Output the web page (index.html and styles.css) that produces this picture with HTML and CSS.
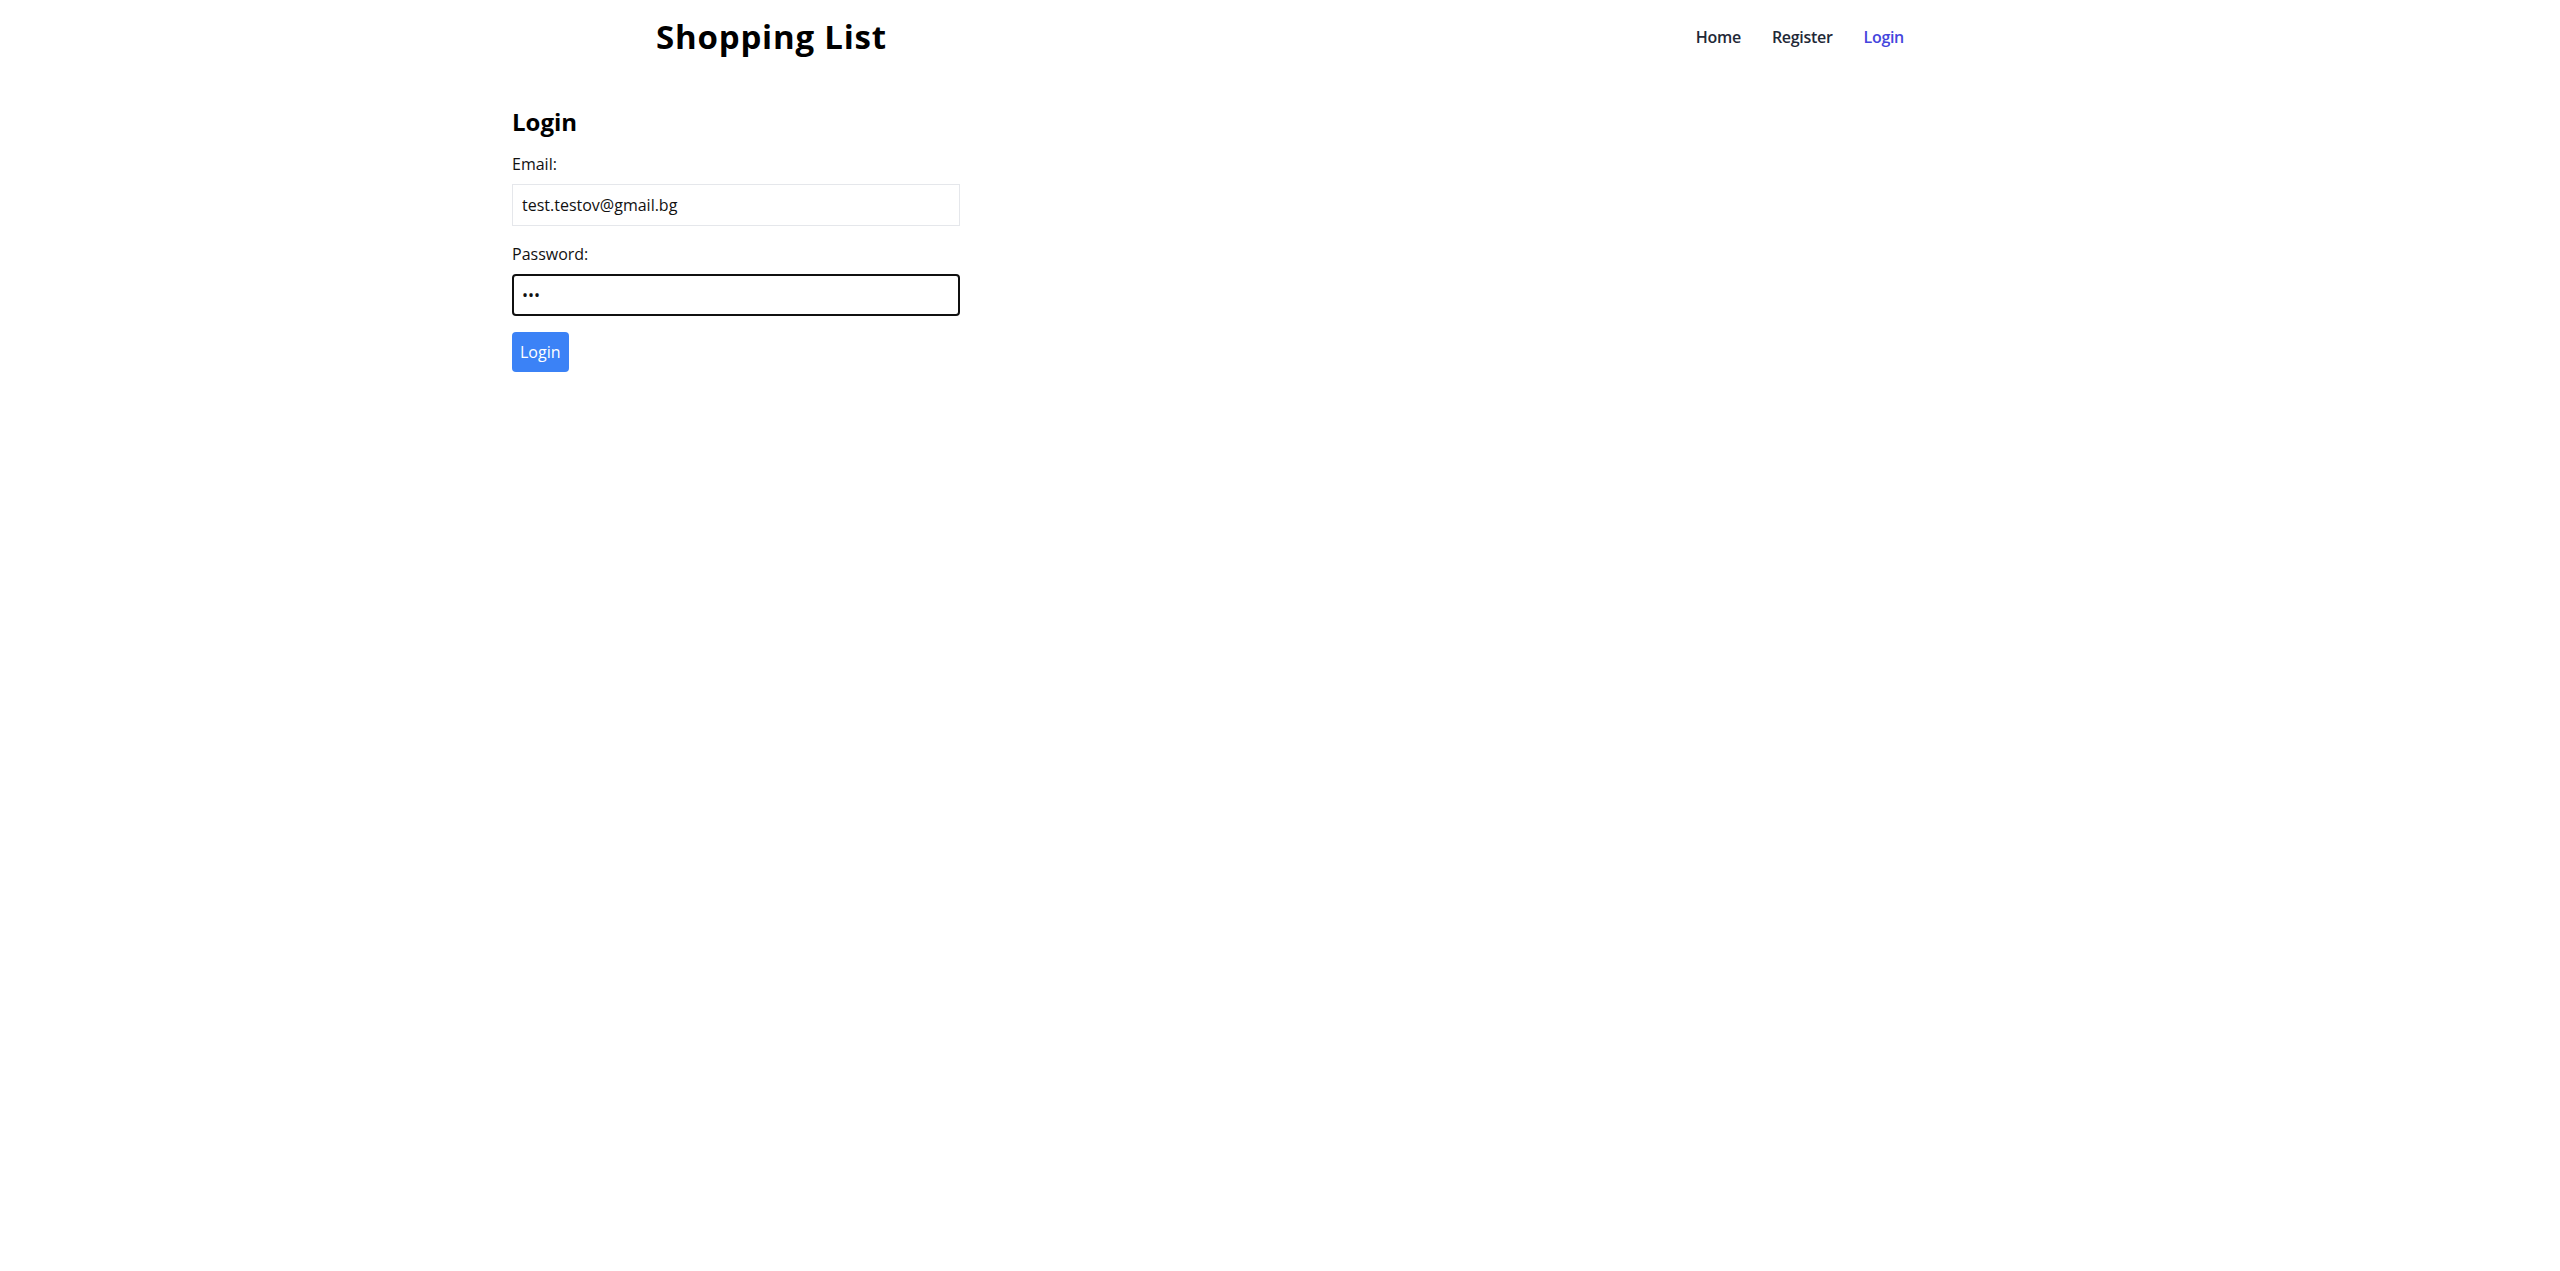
FILE: index.html
```html
<!DOCTYPE html>
<html lang="en">
<head>
<meta charset="utf-8">
<title>Shopping List</title>
<link rel="stylesheet" href="styles.css">
</head>
<body>
<div class="container">
  <header class="header">
    <h1 class="brand">Shopping List</h1>
    <nav class="nav">
      <a class="nav-link" href="#">Home</a>
      <a class="nav-link" href="#">Register</a>
      <a class="nav-link active" href="#">Login</a>
    </nav>
  </header>
  <main class="main">
    <h2 class="title">Login</h2>
    <form class="form">
      <label class="label" for="email">Email:</label>
      <input class="input" id="email" type="email" value="test.testov@gmail.bg">
      <label class="label" for="password">Password:</label>
      <input class="input focused" id="password" type="password" value="123">
      <button class="btn" type="button">Login</button>
    </form>
  </main>
</div>
</body>
</html>
```
FILE: styles.css
```css
* { box-sizing: border-box; }
html, body { margin: 0; padding: 0; background: #fff; }
body {
  font-family: "Open Sans", "Noto Sans", sans-serif;
  font-size: 16px;
  color: #111;
}
.container {
  width: 1536px;
  margin: 0 auto;
}
.header {
  display: flex;
  justify-content: space-between;
  align-items: center;
  padding: 16px 144px;
}
.brand {
  margin: 0;
  font-size: 33px;
  line-height: 42px;
  font-weight: 700;
  letter-spacing: 0.8px;
  color: #000;
}
.nav {
  display: flex;
  gap: 31px;
}
.nav-link {
  text-decoration: none;
  color: #1f2937;
  font-weight: 600;
  font-size: 16px;
  line-height: 24px;
  letter-spacing: -0.3px;
}
.nav-link.active { color: #4446dd; }
.main { padding-top: 32px; }
.title {
  margin: 0 0 14px;
  font-size: 24px;
  line-height: 32px;
  font-weight: 700;
  color: #000;
}
.form {
  display: flex;
  flex-direction: column;
  align-items: flex-start;
  width: 448px;
}
.label {
  line-height: 24px;
  margin-bottom: 8px;
  color: #111;
}
.input {
  width: 448px;
  height: 42px;
  padding: 8px 9px;
  border: 1px solid #e5e7eb;
  font-family: inherit;
  font-size: 16px;
  color: #111;
  margin-bottom: 16px;
  outline: none;
  border-radius: 0;
}
.input.focused {
  border: 2px solid #101010;
  border-radius: 4px;
  padding-left: 8px;
}
.btn {
  background: #3b82f6;
  color: #fff;
  border: none;
  border-radius: 4px;
  padding: 8px;
  font-family: inherit;
  font-size: 16px;
  line-height: 24px;
  height: 40px;
}
```
